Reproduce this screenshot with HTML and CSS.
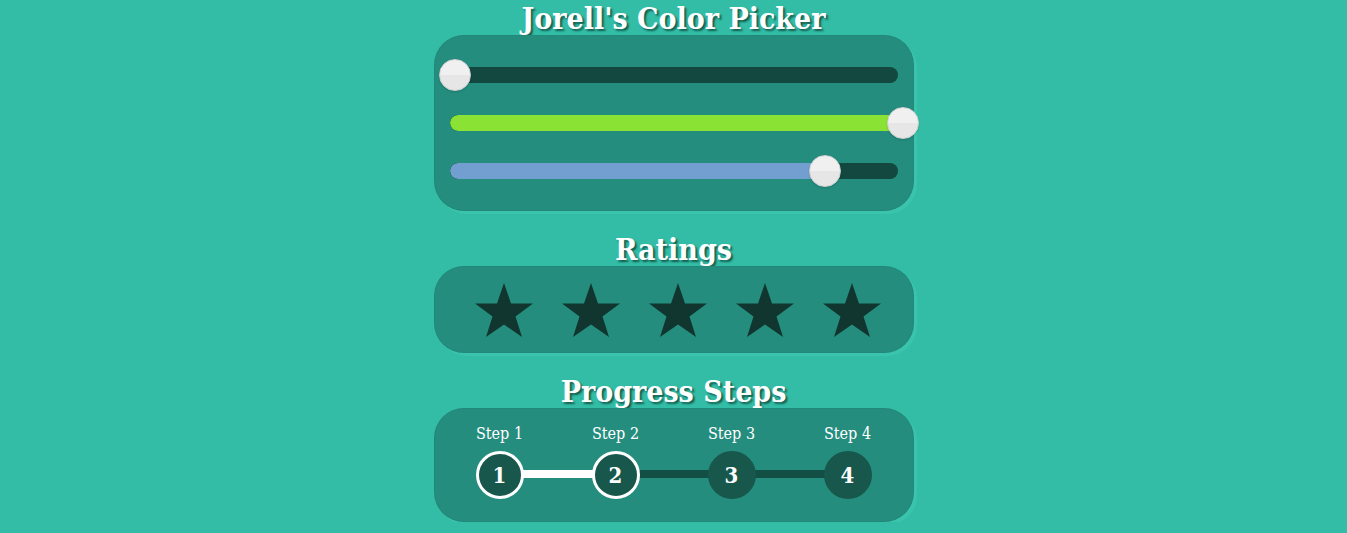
FILE: index.html
```html
<!DOCTYPE html>
<html lang="en">
<head>
<meta charset="utf-8">
<title>Jorell's Color Picker</title>
<link rel="stylesheet" href="styles.css">
</head>
<body>
<main class="page">
  <h1 class="heading">Jorell's Color Picker</h1>
  <section class="panel picker">
    <div class="slider">
      <div class="track"><div class="fill fill-red" style="width:0%"></div></div>
      <div class="thumb" style="left:calc(0% - 11px)"></div>
    </div>
    <div class="slider">
      <div class="track"><div class="fill fill-green" style="width:100%"></div></div>
      <div class="thumb" style="left:calc(100% - 11px)"></div>
    </div>
    <div class="slider">
      <div class="track"><div class="fill fill-blue" style="width:82.8%"></div></div>
      <div class="thumb" style="left:calc(82.8% - 11px)"></div>
    </div>
  </section>

  <h2 class="heading">Ratings</h2>
  <section class="panel ratings">
    <svg class="star" viewBox="0 0 60 56"><polygon points="30,1 37,21.5 59,21.5 41.5,34.5 48,55 30,42.5 12,55 18.5,34.5 1,21.5 23,21.5"/></svg>
    <svg class="star" viewBox="0 0 60 56"><polygon points="30,1 37,21.5 59,21.5 41.5,34.5 48,55 30,42.5 12,55 18.5,34.5 1,21.5 23,21.5"/></svg>
    <svg class="star" viewBox="0 0 60 56"><polygon points="30,1 37,21.5 59,21.5 41.5,34.5 48,55 30,42.5 12,55 18.5,34.5 1,21.5 23,21.5"/></svg>
    <svg class="star" viewBox="0 0 60 56"><polygon points="30,1 37,21.5 59,21.5 41.5,34.5 48,55 30,42.5 12,55 18.5,34.5 1,21.5 23,21.5"/></svg>
    <svg class="star" viewBox="0 0 60 56"><polygon points="30,1 37,21.5 59,21.5 41.5,34.5 48,55 30,42.5 12,55 18.5,34.5 1,21.5 23,21.5"/></svg>
  </section>

  <h2 class="heading">Progress Steps</h2>
  <section class="panel steps">
    <div class="step done">
      <span class="step-label">Step 1</span>
      <span class="circle active">1</span>
    </div>
    <div class="step">
      <span class="step-label">Step 2</span>
      <span class="circle active">2</span>
    </div>
    <div class="step">
      <span class="step-label">Step 3</span>
      <span class="circle">3</span>
    </div>
    <div class="step last">
      <span class="step-label">Step 4</span>
      <span class="circle">4</span>
    </div>
  </section>
</main>
</body>
</html>
```
FILE: styles.css
```css
* { box-sizing: border-box; }
html, body { margin: 0; padding: 0; }
body {
  background: #33bda6;
  font-family: "DejaVu Serif Condensed", "DejaVu Serif", "Liberation Serif", serif;
  color: #fff;
}
.page {
  display: flex;
  flex-direction: column;
  align-items: center;
}
.heading {
  margin: 0;
  height: 35px;
  line-height: 38px;
  font-size: 30px;
  font-weight: bold;
  color: #fff;
  text-shadow: 2px 2px 2px rgba(10, 60, 50, 0.75);
}
h2.heading { margin-top: 20px; }
.panel {
  width: 480px;
  background: #258d7e;
  border-radius: 30px;
  box-shadow: 3px 3px 0 #3ac4ae, inset 0 0 0 1px rgba(0, 0, 0, 0.04);
}
.picker {
  padding: 24px 16px;
  display: flex;
  flex-direction: column;
  gap: 16px;
}
.slider {
  position: relative;
  height: 32px;
  display: flex;
  align-items: center;
}
.track {
  width: 100%;
  height: 16px;
  border-radius: 8px;
  background: #12483f;
  overflow: hidden;
}
.fill { height: 100%; border-radius: 8px; }
.fill-green { background: #8ae234; }
.fill-blue { background: #729fcf; }
.fill-red { background: #ef2929; }
.thumb {
  position: absolute;
  top: 0;
  width: 32px;
  height: 32px;
  border-radius: 50%;
  border: 1px solid #d0d0d0;
  background: linear-gradient(#f0f0f0 0 50%, #e6e6e6 50% 100%);
  box-shadow: 0 1px 2px rgba(0, 0, 0, 0.15);
}
.ratings {
  height: 87px;
  display: flex;
  align-items: center;
  justify-content: center;
  gap: 27px;
  padding-left: 8px;
}
.star {
  width: 60px;
  height: 56px;
  fill: #10362f;
}
.steps {
  height: 114px;
  padding: 16px 8px 0;
  display: grid;
  grid-template-columns: repeat(4, 1fr);
}
.step {
  position: relative;
  display: flex;
  flex-direction: column;
  align-items: center;
  gap: 7px;
}
.step::after {
  content: "";
  position: absolute;
  left: 50%;
  width: 100%;
  top: 46px;
  height: 8px;
  background: #144f45;
}
.step.done::after { background: #fff; }
.step.last::after { display: none; }
.step-label {
  font-size: 16px;
  line-height: 20px;
}
.circle {
  position: relative;
  z-index: 1;
  width: 48px;
  height: 48px;
  border-radius: 50%;
  background: #17574c;
  display: flex;
  align-items: center;
  justify-content: center;
  font-size: 22px;
  font-weight: bold;
}
.circle.active { border: 3px solid #fff; }
```
